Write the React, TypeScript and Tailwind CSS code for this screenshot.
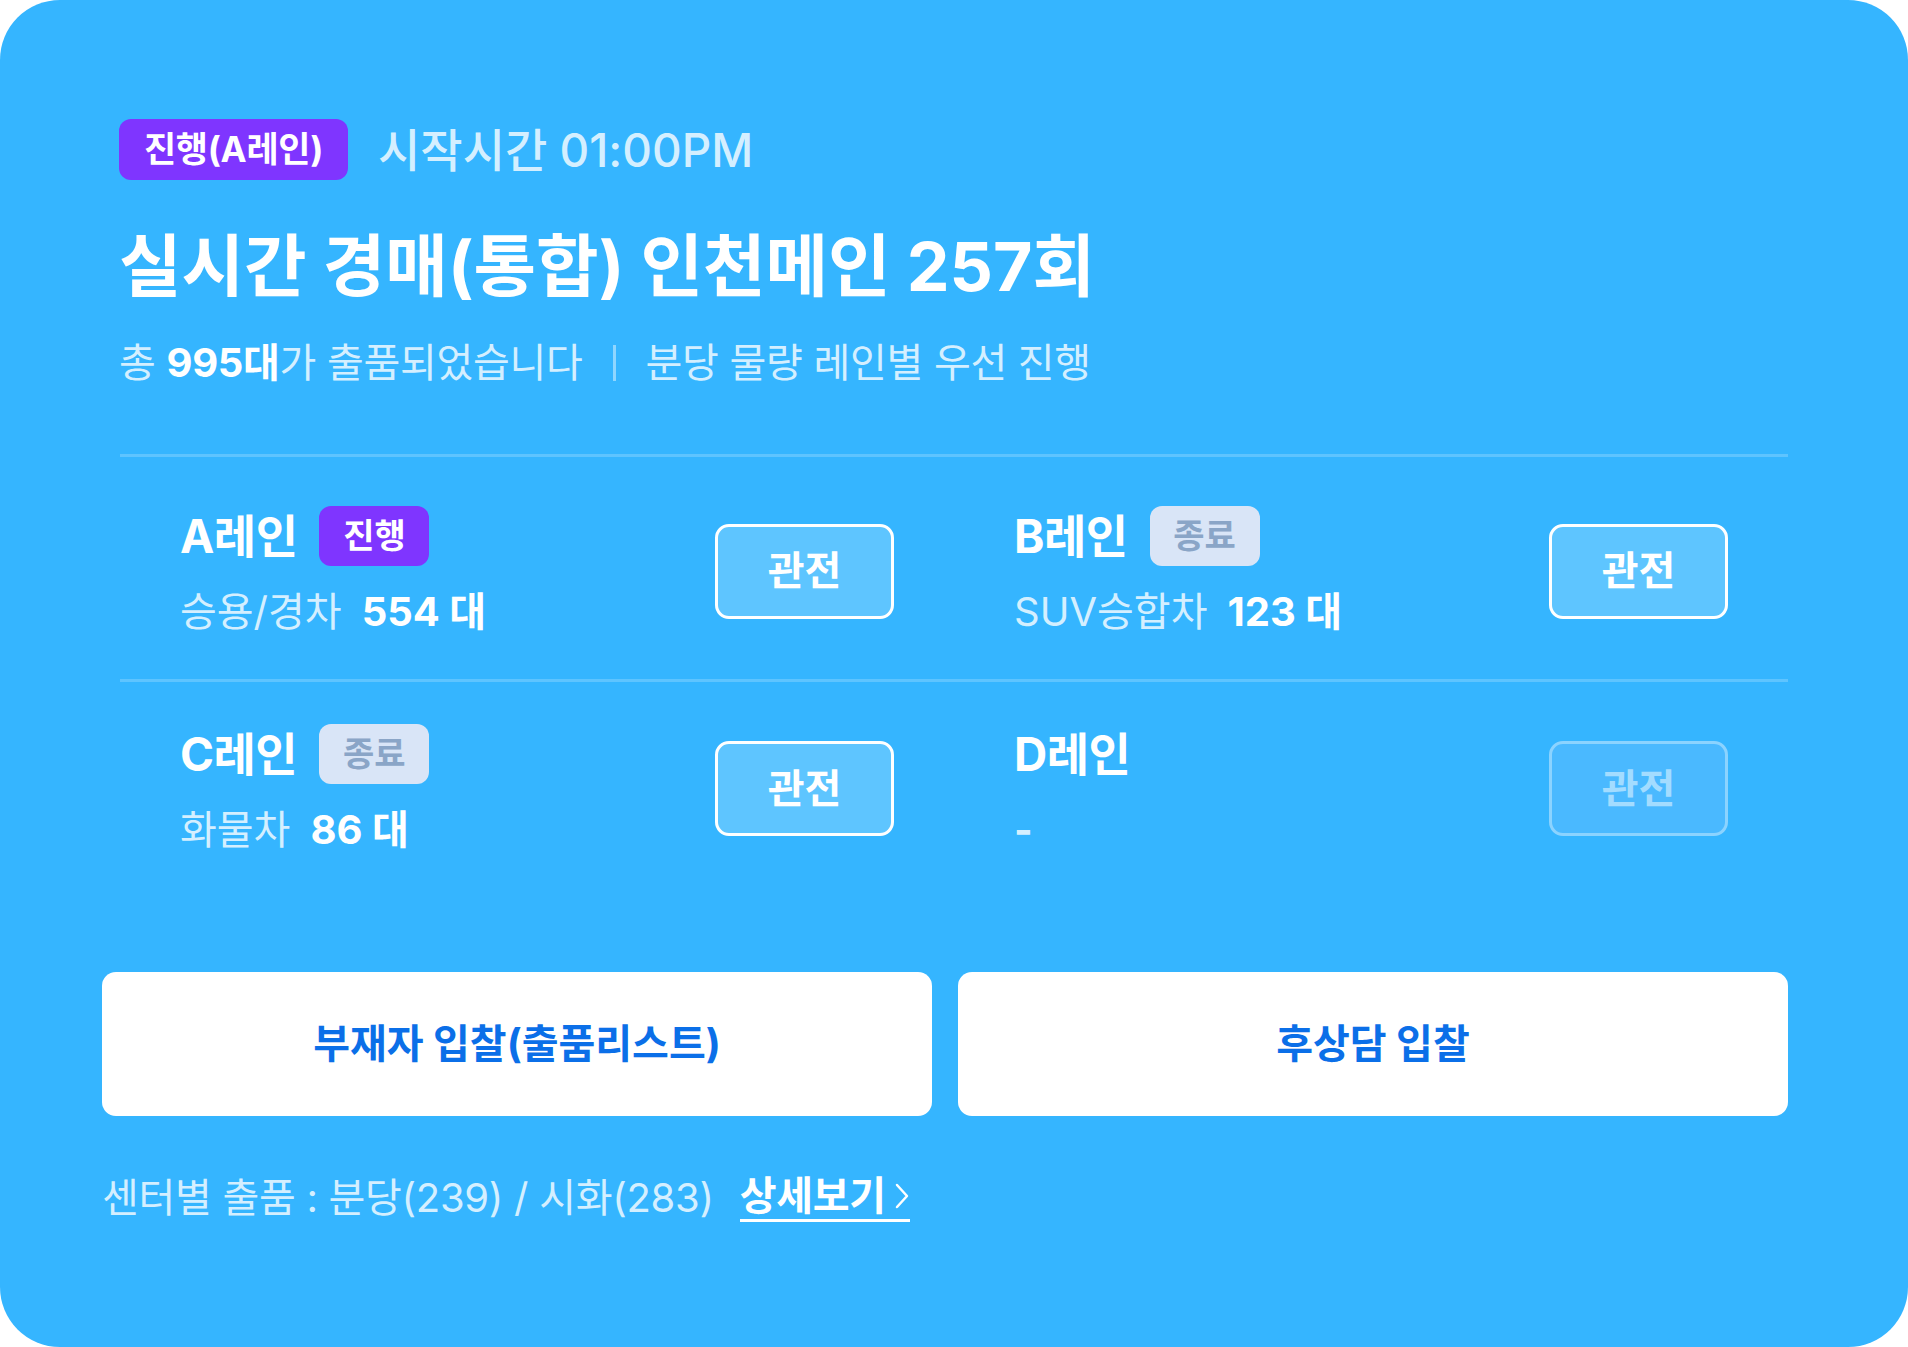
import React from 'react';

const FONT = "font-['Inter','Noto_Sans_CJK_KR',sans-serif]";

type Lane = {
  name: string;
  status?: 'live' | 'done';
  kind?: string;
  count?: string;
  disabled?: boolean;
};

const lanes: Lane[] = [
  { name: 'A레인', status: 'live', kind: '승용/경차', count: '554 대' },
  { name: 'B레인', status: 'done', kind: 'SUV승합차', count: '123 대' },
  { name: 'C레인', status: 'done', kind: '화물차', count: '86 대' },
  { name: 'D레인', disabled: true },
];

function StatusBadge({ status }: { status: 'live' | 'done' }) {
  if (status === 'live') {
    return (
      <span className="flex items-center justify-center w-[110px] h-[60px] rounded-[12px] bg-[#7F35FF] text-white text-[34px] font-bold leading-none">
        진행
      </span>
    );
  }
  return (
    <span className="flex items-center justify-center w-[110px] h-[60px] rounded-[12px] bg-[#D9E5F7] text-[#8AA5C7] text-[34px] font-bold leading-none">
      종료
    </span>
  );
}

function LaneCell({ lane }: { lane: Lane }) {
  return (
    <div className="flex items-center justify-between px-[60px]">
      <div className="flex flex-col">
        <div className="flex items-center gap-[22px] h-[60px]">
          <span className="text-[46px] font-bold text-white leading-none tracking-[-0.5px]">{lane.name}</span>
          {lane.status && <StatusBadge status={lane.status} />}
        </div>
        <div className="mt-[22px] h-[48px] flex items-center text-[40px] leading-[48px]">
          {lane.kind ? (
            <>
              <span className="text-[#D4EFFF]">{lane.kind}</span>
              <span className="ml-[20px] font-bold text-white">{lane.count}</span>
            </>
          ) : (
            <span className="text-[#D4EFFF] text-[40px] font-bold">-</span>
          )}
        </div>
      </div>
      <button
        className={
          lane.disabled
            ? 'w-[179px] h-[95px] rounded-[14px] border-[3px] border-[#8BD3FF] bg-[#4AB9FF] text-[#A3DCFF] text-[40px] font-bold'
            : 'w-[179px] h-[95px] rounded-[14px] border-[3px] border-white bg-[#5EC5FF] text-white text-[40px] font-bold'
        }
      >
        관전
      </button>
    </div>
  );
}

export default function App() {
  return (
    <div className={`w-full h-[1347px] bg-white ${FONT}`}>
      <div className="h-[1347px] rounded-[60px] bg-[#35B5FF] pl-[102px] pr-[120px] pt-[119px]">
        {/* header */}
        <div className="pl-[17px]">
          <div className="flex items-center gap-[30px]">
            <span className="flex items-center justify-center w-[229px] h-[61px] rounded-[12px] bg-[#7F35FF] text-white text-[35px] font-bold leading-none tracking-[-0.3px]">
              진행(A레인)
            </span>
            <span className="text-[46px] font-medium text-[#D4EFFF] leading-none">시작시간 01:00PM</span>
          </div>
          <h1 className="mt-[46px] text-[68px] leading-[80px] font-bold text-white">
            실시간 경매(통합) 인천메인 257회
          </h1>
          <div className="mt-[33px] flex items-center text-[40px] leading-[48px] text-[#D4EFFF] tracking-[-0.3px]">
            <span>
              총 <b className="font-bold text-white">995대</b>가 출품되었습니다
            </span>
            <span className="mx-[30px] w-[3px] h-[36px] bg-[#8FD6FF]" />
            <span>분당 물량 레인별 우선 진행</span>
          </div>
        </div>

        {/* lanes */}
        <div className="ml-[18px] mt-[67px] border-t-[3px] border-[#5EC4FF]">
          <div className="grid grid-cols-2 h-[222px] pt-[6px] items-center">
            <LaneCell lane={lanes[0]} />
            <LaneCell lane={lanes[1]} />
          </div>
          <div className="grid grid-cols-2 h-[216px] items-center border-t-[3px] border-[#5EC4FF]">
            <LaneCell lane={lanes[2]} />
            <LaneCell lane={lanes[3]} />
          </div>
        </div>

        {/* bottom actions */}
        <div className="mt-[77px] grid grid-cols-2 gap-[26px]">
          <button className="h-[144px] rounded-[14px] bg-white text-[#0B6FE8] text-[40px] font-bold">
            부재자 입찰(출품리스트)
          </button>
          <button className="h-[144px] rounded-[14px] bg-white text-[#0B6FE8] text-[40px] font-bold">
            후상담 입찰
          </button>
        </div>

        <div className="mt-[57px] flex items-center text-[40px] leading-[48px] text-[#D4EFFF] tracking-[-0.3px]">
          <span>센터별 출품 : 분당(239) / 시화(283)</span>
          <a className="ml-[26px] flex items-center gap-[8px] border-b-[3px] border-white font-bold text-white leading-[46px]">
            상세보기
            <svg width="16" height="28" viewBox="0 0 16 28" fill="none" stroke="white" strokeWidth="2.5" strokeLinecap="round" strokeLinejoin="round">
              <path d="M3 3 L13 14 L3 25" />
            </svg>
          </a>
        </div>
      </div>
    </div>
  );
}
